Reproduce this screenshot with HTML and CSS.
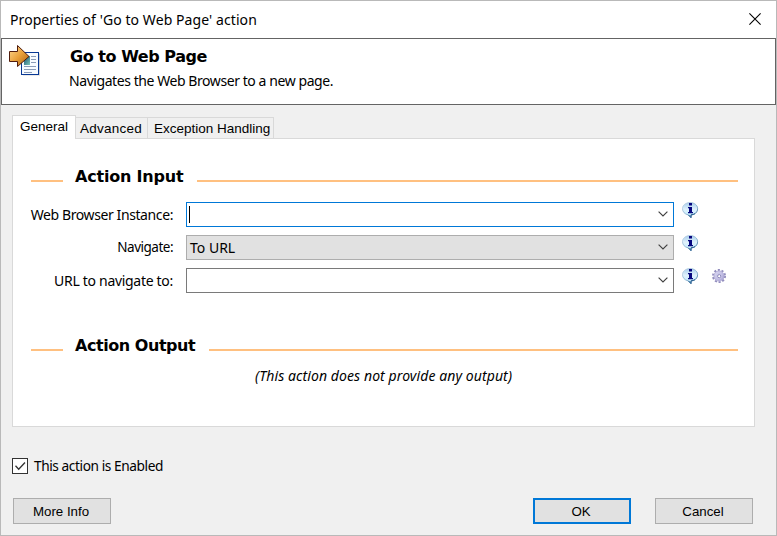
FILE: index.html
```
<!DOCTYPE html>
<html lang="en">
<head>
<meta charset="utf-8">
<title>Properties of 'Go to Web Page' action</title>
<link rel="stylesheet" href="styles.css">
</head>
<body>
<svg width="0" height="0" class="defs" aria-hidden="true">
  <defs>
    <linearGradient id="bubble" x1="0" y1="0" x2="0" y2="1"><stop offset="0" stop-color="#a9cfec"/><stop offset=".45" stop-color="#e0f1fc"/><stop offset="1" stop-color="#b9ecff"/></linearGradient>
    <linearGradient id="rim" x1="0" y1="0" x2="1" y2="1"><stop offset="0" stop-color="#c5d7e8"/><stop offset=".55" stop-color="#8fb4d2"/><stop offset="1" stop-color="#29608f"/></linearGradient>
    <linearGradient id="gold" x1="0" y1="0" x2="1" y2="1"><stop offset="0" stop-color="#ffdc96"/><stop offset=".5" stop-color="#e9a13b"/><stop offset="1" stop-color="#a95d10"/></linearGradient>
    <linearGradient id="photo" x1="0" y1="0" x2="1" y2="1"><stop offset="0" stop-color="#164e70"/><stop offset="1" stop-color="#7cc5b8"/></linearGradient>
    <linearGradient id="lilac" x1="0" y1="0" x2="1" y2="1"><stop offset="0" stop-color="#dedcf4"/><stop offset="1" stop-color="#aaa5d6"/></linearGradient>
    <symbol id="info" viewBox="0 0 17 17">
      <path d="M8 .6C3.800.6.5 3.100.5 6.700c0 3.100 2.300 5.400 5.500 6.100L9 15.700v-2.800c4-.2 6.600-2.800 6.600-6.200C15.600 3.100 12.300.6 8 .6Z" fill="url(#bubble)" stroke="url(#rim)"/>
      <path d="M13 11.600c-1 .7-2.500 1.100-4 1.300v2.600l-2.500-2.600" fill="none" stroke="#285d8e"/>
      <path d="M7 1h3v2.500H7ZM6 5h4v5h1v1.300H6V10h1V6.300H6Z" fill="#07077f"/>
    </symbol>
    <symbol id="chevron" viewBox="0 0 10 6"><path d="M.6.6 5 5 9.400.6" fill="none" stroke="#404040" stroke-width="1.150"/></symbol>
  </defs>
</svg>
<div class="dialog">
  <div class="titlebar">
    <span class="caption">Properties of 'Go to Web Page' action</span>
    <svg class="close" viewBox="0 0 12 12"><path d="m.4.4 11.200 11.200M11.600.4.4 11.600" stroke="#000" stroke-width="1.100"/></svg>
  </div>
  <header class="banner">
    <svg class="page-icon" viewBox="0 0 32 32">
      <path d="M14 8.500h17v22H14" fill="#d4d4d4"/>
      <rect x="12.500" y="7.500" width="17" height="22" fill="#f7fbff" stroke="#083894"/>
      <rect x="15" y="11" width="6" height="9" fill="url(#photo)"/>
      <path d="M22 11.500h5M22 14.500h5M22 17.500h5M15 21.500h12M15 24.500h12M15 27.500h8" stroke="#8a9cb8"/>
      <path d="M.5 6.500h8v-6L20 11.500l-11.500 10v-5h-8Z" fill="url(#gold)" stroke="#501c0d"/>
    </svg>
    <div class="heading">
      <h1>Go to Web Page</h1>
      <p>Navigates the Web Browser to a new page.</p>
    </div>
  </header>
  <nav class="tabs">
    <span class="tab active"><b>General</b></span><span class="tab advanced"><b>Advanced</b></span><span class="tab exception"><b>Exception Handling</b></span>
  </nav>
  <main class="panel">
    <div class="section"><i class="lead"></i><h2 class="input-title">Action Input</h2><i class="rule"></i></div>
    <div class="fields">
      <div class="row"><label><span class="l1">Web Browser Instance:</span></label><div class="combo focus"><i class="caret"></i><svg class="chev"><use href="#chevron"/></svg></div><svg class="info"><use href="#info"/></svg></div>
      <div class="row"><label><span class="l2">Navigate:</span></label><div class="combo list"><span class="value">To URL</span><svg class="chev"><use href="#chevron"/></svg></div><svg class="info"><use href="#info"/></svg></div>
      <div class="row"><label><span class="l3">URL to navigate to:</span></label><div class="combo"><svg class="chev"><use href="#chevron"/></svg></div><svg class="info"><use href="#info"/></svg>
        <svg class="gear" viewBox="0 0 15 15"><circle cx="7" cy="7" r="6.100" fill="none" stroke="#918cbd" stroke-width="1.800" stroke-dasharray="2.100 1.732"/><circle cx="7" cy="7" r="5.100" fill="url(#lilac)" stroke="#9f99ca" stroke-width=".7"/><circle cx="7" cy="7" r="2.900" fill="#c9c6e8"/><circle cx="7.200" cy="7.200" r="1.600" fill="#fff" stroke="#8580b5" stroke-width=".9"/></svg></div>
    </div>
    <div class="section output"><i class="lead"></i><h2 class="output-title">Action Output</h2><i class="rule"></i></div>
    <p class="note"><span>(This action does not provide any output)</span></p>
  </main>
  <div class="enabled"><span class="checkbox"><svg viewBox="0 0 14 14"><path d="m2.500 6.800 3.200 3.400L12 3.500" fill="none" stroke="#333" stroke-width="1.300"/></svg></span><span class="check-label">This action is Enabled</span></div>
  <footer>
    <button class="more"><span>More Info</span></button><button class="ok"><span>OK</span></button><button class="cancel"><span>Cancel</span></button>
  </footer>
</div>
</body>
</html>
```
FILE: styles.css
```
* { box-sizing: border-box; }
body, h1, h2, p { margin: 0; }
body { background: #f0f0f0; color: #000; font: 14px/17px "Noto Sans", sans-serif; }
svg { display: block; flex: none; }
i { display: block; }
.defs { position: absolute; }
.dialog { width: 777px; height: 536px; border: 1px solid #b9b9b9; display: flex; flex-direction: column; overflow: hidden; white-space: nowrap; background: #f0f0f0; }
.titlebar { height: 37px; flex: none; display: flex; justify-content: space-between; align-items: center; background: #fff; padding: 0 15px 0 9px; }
.caption { line-height: 18px; letter-spacing: .08px; }
.close { width: 12px; height: 12px; margin-top: -1px; }
.banner { height: 67px; flex: none; display: flex; width: 775px; background: #fff; border: 1px solid #646464; padding: 6px 0 0 7px; }
.page-icon { width: 32px; height: 32px; }
.heading { margin-left: 28px; padding-top: 2px; }
h1 { font: bold 16px/19px "DejaVu Sans", sans-serif; letter-spacing: -.45px; margin-left: 1px; }
.heading p { margin-top: 6px; letter-spacing: -.43px; }
.tabs { display: flex; align-items: flex-end; height: 33px; margin-left: 11px; flex: none; position: relative; z-index: 1; }
.tab { height: 21px; border: 1px solid #d9d9d9; border-width: 1px 1px 0 0; font: 13.500px/21px "Liberation Sans", sans-serif; padding-left: 4px; }
.tab b { font-weight: normal; }
.active { width: 64px; height: 24px; margin-bottom: -1px; border-left-width: 1px; background: #fff; padding-left: 7px; line-height: 22px; }
.advanced { width: 72px; letter-spacing: .25px; }
.exception { width: 126px; padding-left: 6px; }
.panel { width: 743px; height: 289px; margin-left: 11px; flex: none; border: 1px solid #d9d9d9; background: #fff; padding: 27px 16px 0 18px; }
.section { display: flex; align-items: center; height: 21px; }
.section i { height: 2px; background: #ffc080; margin-top: 9px; }
.lead { width: 32px; }
.rule { flex: 1; }
h2 { font: bold 16px/19px "DejaVu Sans", sans-serif; letter-spacing: -.2px; margin-left: 12px; width: 122px; }
.output-title { width: 134px; letter-spacing: -.45px; }
.fields { margin-top: 15px; display: grid; gap: 8px; }
.row { display: flex; height: 25px; }
.row label { width: 142px; margin-right: 13px; padding-top: 4px; display: flex; justify-content: flex-end; }
.l1 { letter-spacing: -.4px; }
.l2 { font-size: 13.500px; letter-spacing: -.5px; }
.l3 { letter-spacing: -.3px; }
.combo { width: 488px; height: 25px; background: #fff; border: 1px solid #7a7a7a; display: flex; align-items: center; padding: 0 5px 0 3px; }
.focus { border-color: #0078d7; }
.list { background: #e1e1e1; border-color: #adadad; }
.caret { width: 1px; height: 17px; background: #000; margin: -1px 0 0 -1px; }
.value { line-height: 19px; }
.chev { width: 10px; height: 6px; margin-left: auto; margin-top: -1px; }
.info { width: 17px; height: 17px; margin-left: 8px; }
.gear { width: 15px; height: 15px; margin: 1px 0 0 13px; }
.output { margin-top: 42px; }
.note { margin: 11px 0 0; padding-left: 224px; font-style: italic; letter-spacing: .09px; }
.enabled { display: flex; align-items: center; margin: 31px 0 0 11px; height: 16px; flex: none; line-height: 16px; }
.checkbox { width: 16px; height: 16px; background: #fff; border: 1px solid #333; margin-right: 6px; }
.check-label { font-size: 13.700px; letter-spacing: -.42px; }
footer { display: flex; margin: 24px 0 0 12px; }
button { width: 98px; height: 26px; border: 1px solid #adadad; background: #e1e1e1; padding: 1px 0 0; color: #000; text-align: center; font: 13.300px/20px "Liberation Sans", sans-serif; }
.more { padding-right: 2px; }
.ok { margin-left: 422px; border: 2px solid #0078d7; padding-right: 2px; }
.cancel { margin-left: 24px; padding-right: 2px; }
```
